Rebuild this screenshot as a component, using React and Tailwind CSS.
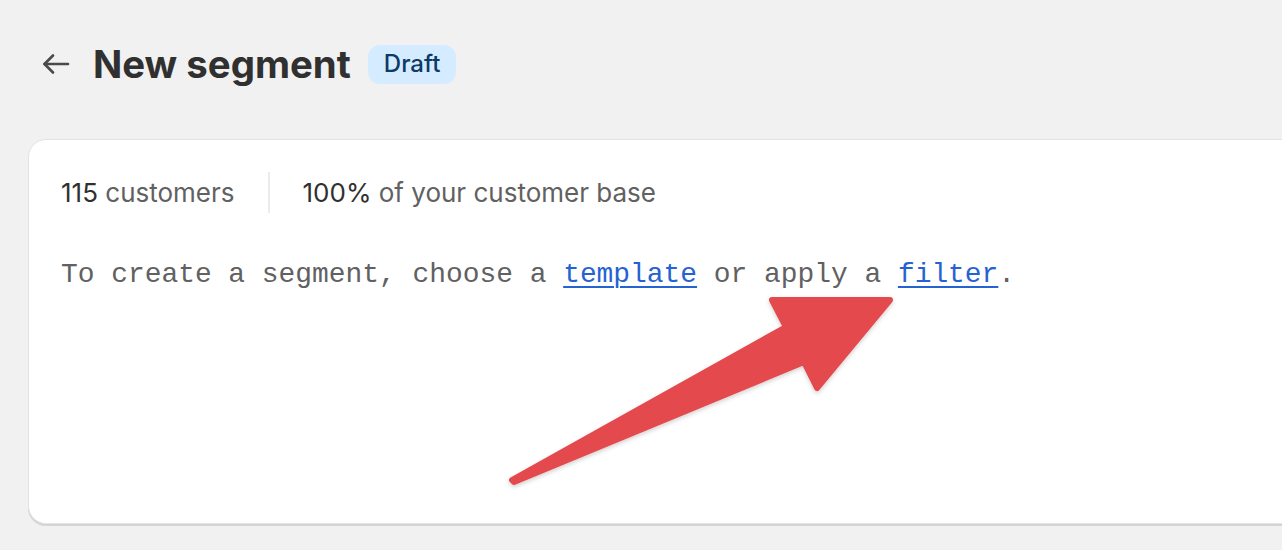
import React from "react";

const BackArrow = () => (
  <svg width="28" height="22" viewBox="0 0 28 22" fill="none" stroke="#4a4a4a" strokeWidth="2.6" strokeLinecap="round" strokeLinejoin="round">
    <path d="M26 11H2.5" />
    <path d="M11 2.5L2.5 11L11 19.5" />
  </svg>
);

// red annotation arrow drawn over the card
const PointerArrow = () => (
  <svg className="absolute left-0 top-0 pointer-events-none" width="1282" height="550" viewBox="0 0 1282 550">
    <defs>
      <filter id="sh" x="-10%" y="-10%" width="120%" height="120%">
        <feDropShadow dx="0" dy="2" stdDeviation="2" floodColor="#000" floodOpacity="0.18" />
      </filter>
    </defs>
    <polygon
      points="512,480 786,327 772,300 890,300 817,388 804,362 514,482"
      fill="#e34a4d"
      stroke="#e34a4d"
      strokeWidth="6"
      strokeLinejoin="round"
      filter="url(#sh)"
    />
  </svg>
);

const App = () => {
  return (
    <div className="relative w-[1282px] h-[550px] overflow-hidden bg-[#f1f1f1]" style={{ fontFamily: "Inter, 'Noto Sans', sans-serif" }}>
      {/* Header */}
      <div className="flex items-center h-[128px] pl-[42px]">
        <BackArrow />
        <h1 className="ml-[23px] text-[38.4px] font-bold text-[#303030] leading-none">New segment</h1>
        <span className="ml-[17px] rounded-[12px] bg-[#d5ebff] px-[16px] h-[39px] flex items-center text-[24px] text-[#0d3a66] font-[450]">Draft</span>
      </div>

      {/* Card */}
      <div className="ml-[28px] mt-[11px] w-[1300px] h-[385px] rounded-[18px] bg-white border border-[#e3e3e3] shadow-[0_2px_0_0_#d4d4d4]">
        <div className="flex items-center pl-[32px] pt-[32px]">
          <div className="text-[26px] text-[#616161] leading-[41px]">
            <span className="text-[#303030]">115</span> customers
          </div>
          <div className="mx-[33px] w-[2px] h-[41px] bg-[#ebebeb]" />
          <div className="text-[26px] text-[#616161] leading-[41px]">
            <span className="text-[#303030]">100%</span> of your customer base
          </div>
        </div>
        <p className="pl-[32px] mt-[42px] text-[27.9px] leading-[40px] text-[#616161]" style={{ fontFamily: "'Liberation Mono', monospace" }}>
          To create a segment, choose a{" "}
          <a href="#" className="text-[#2463d1] underline underline-offset-[4px] decoration-[2px]">template</a> or apply a{" "}
          <a href="#" className="text-[#2463d1] underline underline-offset-[4px] decoration-[2px]">filter</a>.
        </p>
      </div>

      <PointerArrow />
    </div>
  );
};

export default App;
